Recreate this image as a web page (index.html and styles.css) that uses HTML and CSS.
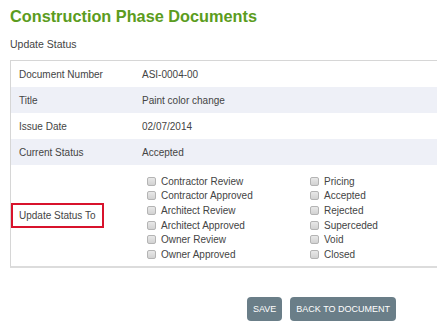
FILE: index.html
```html
<!DOCTYPE html>
<html>
<head>
<meta charset="utf-8">
<link rel="stylesheet" href="styles.css">
</head>
<body>
<div class="page">
  <h1 class="title">Construction Phase Documents</h1>
  <div class="subtitle">Update Status</div>
  <div class="details">
    <div class="row">
      <div class="label">Document Number</div>
      <div class="value">ASI-0004-00</div>
    </div>
    <div class="row alt">
      <div class="label">Title</div>
      <div class="value">Paint color change</div>
    </div>
    <div class="row">
      <div class="label">Issue Date</div>
      <div class="value">02/07/2014</div>
    </div>
    <div class="row alt">
      <div class="label">Current Status</div>
      <div class="value">Accepted</div>
    </div>
    <div class="row status-row">
      <div class="label"><span class="highlight">Update Status To</span></div>
      <div class="options">
        <div class="col col1">
          <label class="opt"><input type="checkbox"><span>Contractor Review</span></label>
          <label class="opt"><input type="checkbox"><span>Contractor Approved</span></label>
          <label class="opt"><input type="checkbox"><span>Architect Review</span></label>
          <label class="opt"><input type="checkbox"><span>Architect Approved</span></label>
          <label class="opt"><input type="checkbox"><span>Owner Review</span></label>
          <label class="opt"><input type="checkbox"><span>Owner Approved</span></label>
        </div>
        <div class="col">
          <label class="opt"><input type="checkbox"><span>Pricing</span></label>
          <label class="opt"><input type="checkbox"><span>Accepted</span></label>
          <label class="opt"><input type="checkbox"><span>Rejected</span></label>
          <label class="opt"><input type="checkbox"><span>Superceded</span></label>
          <label class="opt"><input type="checkbox"><span>Void</span></label>
          <label class="opt"><input type="checkbox"><span>Closed</span></label>
        </div>
      </div>
    </div>
  </div>
  <div class="actions">
    <button class="btn">SAVE</button>
    <button class="btn">BACK TO DOCUMENT</button>
  </div>
</div>
</body>
</html>
```
FILE: styles.css
```css
html, body {
  margin: 0;
  padding: 0;
  background: #fff;
  overflow: hidden;
}
body {
  font-family: "Liberation Sans", Arial, sans-serif;
  font-size: 10px;
  color: #444;
  width: 437px;
  height: 327px;
}
.page {
  padding: 5px 0 0 10px;
}
.title {
  margin: 0;
  font-size: 16.3px;
  line-height: 22px;
  font-weight: bold;
  color: #5b9c20;
}
.subtitle {
  margin-top: 10px;
  font-size: 10.5px;
  line-height: 14px;
  color: #444;
}
.details {
  margin-top: 9px;
  width: 440px;
  border-top: 1px solid #d6d6d6;
  border-left: 1px solid #d6d6d6;
  border-bottom: 2px solid #dcdcdc;
}
.row {
  display: flex;
  align-items: center;
  height: 26px;
}
.row.alt {
  background: #eef0f7;
}
.label {
  width: 123px;
  padding-left: 8px;
  flex: none;
  white-space: nowrap;
}
.value {
  flex: 1;
}
.status-row {
  height: 101px;
}
.status-row .label {
  padding-left: 0;
  width: 136px;
}
.highlight {
  display: inline-block;
  box-sizing: border-box;
  width: 93px;
  height: 25px;
  line-height: 21px;
  padding-left: 6px;
  border: 2px solid #d8132c;
  white-space: nowrap;
}
.options {
  display: flex;
  align-self: flex-start;
  padding-top: 9px;
}
.col {
  display: flex;
  flex-direction: column;
}
.col1 {
  width: 163px;
}
.opt {
  display: flex;
  align-items: center;
  height: 14.6px;
  color: #444;
}
.opt input {
  appearance: none;
  -webkit-appearance: none;
  margin: 0 5px 0 0;
  width: 9px;
  height: 9px;
  border: 1px solid #b4b4b4;
  border-radius: 2px;
  background: linear-gradient(#e8e8e8, #d2d2d2);
  flex: none;
}
.actions {
  display: flex;
  gap: 8px;
  padding-left: 237px;
  margin-top: 29px;
}
.btn {
  font-family: "Liberation Sans", Arial, sans-serif;
  font-size: 9px;
  color: #fff;
  background: #6a7e88;
  border: none;
  border-radius: 4px;
  height: 24px;
  padding: 0 6px;
}
```
